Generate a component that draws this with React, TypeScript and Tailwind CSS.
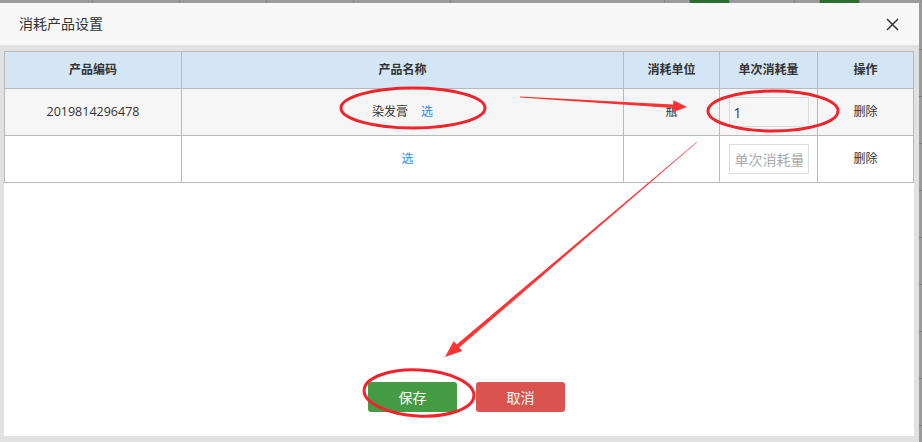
import React from 'react';

type Pt = [number, number];

// tapered annotation arrow, thin at the tail and thick near the head
const arrowPoints = (from: Pt, to: Pt, w0: number, w1: number, headLen: number, headHalf: number) => {
    const dx = to[0] - from[0];
    const dy = to[1] - from[1];
    const len = Math.hypot(dx, dy);
    const ux = dx / len, uy = dy / len;
    const nx = -uy, ny = ux;
    const bx = to[0] - ux * headLen, by = to[1] - uy * headLen;
    const pts: Pt[] = [
        [from[0] + nx * w0 / 2, from[1] + ny * w0 / 2],
        [bx + nx * w1 / 2, by + ny * w1 / 2],
        [bx + nx * headHalf, by + ny * headHalf],
        to,
        [bx - nx * headHalf, by - ny * headHalf],
        [bx - nx * w1 / 2, by - ny * w1 / 2],
        [from[0] - nx * w0 / 2, from[1] - ny * w0 / 2],
    ];
    return pts.map(p => `${p[0].toFixed(1)},${p[1].toFixed(1)}`).join(' ');
};

const cols = ['w-[177px]', 'w-[442px]', 'w-[96px]', 'w-[98px]', 'w-[96px]'];
const headers = ['产品编码', '产品名称', '消耗单位', '单次消耗量', '操作'];

const Cell: React.FC<{ i: number; children?: React.ReactNode }> = ({ i, children }) => (
    <div className={`${cols[i]} shrink-0 h-full border-r border-[#b9b9b9] flex items-center justify-center`}>
        {children}
    </div>
);

const Annotations: React.FC = () => (
    <svg className="absolute inset-0 pointer-events-none" width={922} height={442} viewBox="0 0 922 442">
        <g fill="none" stroke="#f3232b" strokeWidth={3}>
            <ellipse cx={413} cy={108} rx={72} ry={20} />
            <ellipse cx={773} cy={111} rx={65} ry={20} />
            <ellipse cx={419} cy={393} rx={55} ry={23} transform="rotate(3 419 393)" />
        </g>
        <polygon fill="#f33" points={arrowPoints([520, 97], [687, 107], 1, 3.4, 14, 6)} />
        <polygon fill="#f33" points={arrowPoints([697, 142], [445, 357], 0.4, 4, 17, 6.5)} />
    </svg>
);

const topSegs = [
    { w: 'w-[93px]', c: '' },
    { w: 'w-[87px]', c: '' },
    { w: 'w-[87px]', c: '' },
    { w: 'w-[87px]', c: '' },
    { w: 'w-[97px]', c: '' },
    { w: 'w-[214px]', c: '' },
    { w: 'w-[25px]', c: '' },
    { w: 'w-[40px]', c: 'bg-[#2e6b30]' },
    { w: 'w-[65px]', c: '' },
    { w: 'w-[25px]', c: '' },
    { w: 'w-[40px]', c: 'bg-[#2e6b30]' },
    { w: 'w-[62px]', c: '' },
];

export default function App() {
    return (
        <div
            className="relative w-[922px] h-[442px] overflow-hidden bg-[#9b9b9b] flex flex-col text-[#333]"
            style={{ fontFamily: '"Open Sans", "Noto Sans CJK SC", sans-serif' }}
        >
            <div className="h-[3px] flex shrink-0">
                {topSegs.map((s, i) => (
                    <div key={i} className={`${s.w} ${s.c} h-full shrink-0 border-r border-[#8a8a8a]`} />
                ))}
            </div>
            <div className="flex-1 flex">
                <div className="w-[919px] flex flex-col bg-[#e1e1e1]">
                    <div className="h-[42px] bg-[#f7f7f7] flex items-center justify-between pl-[19px] pr-[20px]">
                        <span className="text-[14px] leading-none">消耗产品设置</span>
                        <svg width={13} height={13} viewBox="0 0 13 13">
                            <path d="M1 1 L12 12 M12 1 L1 12" stroke="#333" strokeWidth={1.5} />
                        </svg>
                    </div>
                    <div className="flex-1 flex flex-col pt-[6px] pl-[4px] pr-[5px] pb-[6px]">
                        <div className="flex-1 bg-white flex flex-col">
                            <div className="border-l border-t border-[#b9b9b9] text-[12px]">
                                <div className="h-[37px] flex bg-[#d4e5f6] border-b border-[#b9b9b9] font-bold">
                                    {headers.map((h, i) => (
                                        <Cell key={h} i={i}>{h}</Cell>
                                    ))}
                                </div>
                                <div className="h-[47px] flex bg-[#f6f6f6] border-b border-[#b9b9b9]">
                                    <Cell i={0}><span className="text-[12.5px]">2019814296478</span></Cell>
                                    <Cell i={1}>
                                        <span>染发膏</span>
                                        <span className="ml-[13px] text-[#2d8cf0]">选</span>
                                    </Cell>
                                    <Cell i={2}>瓶</Cell>
                                    <Cell i={3}>
                                        <input
                                            defaultValue="1"
                                            className="w-[80px] h-[30px] border border-[#dcdcdc] bg-transparent px-[4px] text-[14px] text-[#333] outline-none"
                                        />
                                    </Cell>
                                    <Cell i={4}>删除</Cell>
                                </div>
                                <div className="h-[47px] flex bg-white border-b border-[#b9b9b9]">
                                    <Cell i={0} />
                                    <Cell i={1}><span className="pl-[10px] text-[#2d8cf0]">选</span></Cell>
                                    <Cell i={2} />
                                    <Cell i={3}>
                                        <input
                                            placeholder="单次消耗量"
                                            className="w-[80px] h-[30px] border border-[#dcdcdc] bg-white px-[5px] text-[14px] placeholder:text-[#aaa] outline-none"
                                        />
                                    </Cell>
                                    <Cell i={4}>删除</Cell>
                                </div>
                            </div>
                            <div className="mt-auto flex gap-[19px] pl-[364px] pb-[24px]">
                                <button className="w-[89px] h-[30px] rounded-[3px] bg-[#449b44] text-white text-[14px]">保存</button>
                                <button className="w-[89px] h-[30px] rounded-[3px] bg-[#d9534f] text-white text-[14px]">取消</button>
                            </div>
                        </div>
                    </div>
                </div>
                <div className="flex-1 flex flex-col">
                    {[0, 1, 2, 3, 4, 5, 6, 7, 8].map(i => (
                        <div key={i} className="h-[47px] shrink-0 border-b border-[#7d7d7d]" />
                    ))}
                </div>
            </div>
            <Annotations />
        </div>
    );
}
